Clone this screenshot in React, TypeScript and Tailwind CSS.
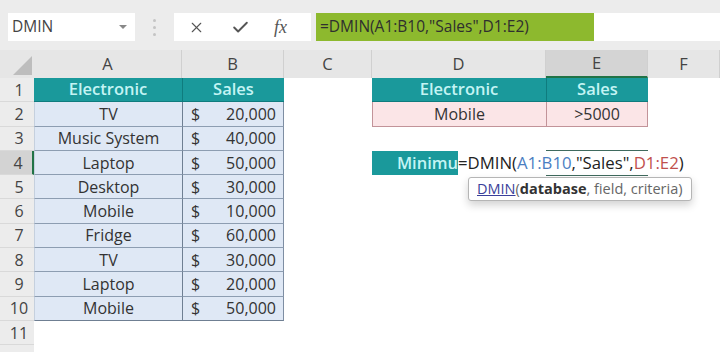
import { X, Check } from 'lucide-react';

const cols = 'grid grid-cols-[34px_148px_102px_88px_174px_102px_72px]';

const sales = [
  ['TV', '20,000'],
  ['Music System', '40,000'],
  ['Laptop', '50,000'],
  ['Desktop', '30,000'],
  ['Mobile', '10,000'],
  ['Fridge', '60,000'],
  ['TV', '30,000'],
  ['Laptop', '20,000'],
  ['Mobile', '50,000'],
];

const RowHead = ({ n, active }: { n?: number; active?: boolean }) => (
  <div
    className={`flex h-[24.3px] items-center justify-center border-b border-[#d9d9d9] pl-1 text-[16px] text-[#444] ${
      active ? 'bg-[#d3d3d3] border-r-2 border-r-[#217346]' : 'bg-[#ececec]'
    }`}>
    {n}
  </div>
);

const Toolbar = () => (
  <div className="flex h-[50px] items-start bg-[#ececec] pt-[13px]">
    <div className="ml-2 flex h-[28px] w-[127px] items-center justify-between bg-white pl-1 pr-2 text-[15.5px] text-[#444]">
      <span>DMIN</span>
      <span className="h-0 w-0 border-x-[4px] border-t-[4px] border-x-transparent border-t-[#888]" />
    </div>
    <div className="ml-[18px] mt-[6px] flex flex-col gap-[4px]">
      <span className="h-[3px] w-[3px] rounded-full bg-[#c4c4c4]" />
      <span className="h-[3px] w-[3px] rounded-full bg-[#c4c4c4]" />
      <span className="h-[3px] w-[3px] rounded-full bg-[#c4c4c4]" />
    </div>
    <div className="ml-[18px] flex h-[28px] w-[137px] items-center bg-white text-[#555]">
      <X size={17} strokeWidth={1.6} className="ml-[14px]" />
      <Check size={19} strokeWidth={2.4} className="ml-[26px]" />
      <span className="ml-[24px] font-['Liberation_Serif',serif] text-[18px] italic">fx</span>
    </div>
    <div className="ml-[5px] flex h-[28px] w-[278px] items-center bg-[#8db92e] pl-1 text-[15.5px] text-[#2f2f2f]">
      =DMIN(A1:B10,"Sales",D1:E2)
    </div>
    <div className="h-[28px] flex-1 bg-white" />
  </div>
);

const ColHeads = () => (
  <div className={`${cols} h-[28px] bg-[#e6e6e6] text-[16.5px] text-[#444]`}>
    <div className="relative">
      <div className="absolute bottom-[3px] right-[2px] h-0 w-0 border-b-[19px] border-l-[19px] border-b-[#bdbdbd] border-l-transparent" />
    </div>
    {['A', 'B', 'C', 'D', 'E', 'F'].map((c) => (
      <div
        key={c}
        className={`flex items-center justify-center border-r border-[#d0d0d0] ${
          c === 'E' ? 'bg-[#d4d4d4] border-b-2 border-b-[#217346]' : ''
        }`}>
        {c}
      </div>
    ))}
  </div>
);

const Head = ({ label, left }: { label: string; left?: boolean }) => (
  <div
    className={`flex h-[24.3px] items-center justify-center border-b border-[#0f7c7e] bg-[#1a999b] text-[16.5px] font-semibold text-[#c4f4f4] ${
      left ? 'border-l' : ''
    }`}>
    {label}
  </div>
);

export default function App() {
  return (
    <div className="relative h-[352px] w-[720px] overflow-hidden bg-white font-['Open_Sans',sans-serif] text-[#333]">
      <Toolbar />
      <ColHeads />

      {/* row 1 */}
      <div className={`${cols} text-[16px]`}>
        <RowHead n={1} />
        <Head label="Electronic" />
        <Head label="Sales" left />
        <div />
        <Head label="Electronic" />
        <Head label="Sales" left />
        <div />
      </div>

      {sales.map(([name, amount], i) => {
        const n = i + 2;
        const last = n === 10;
        return (
          <div key={n} className={`${cols} text-[16px]`}>
            <RowHead n={n} active={n === 4} />
            <div
              className={`flex h-[24.3px] items-center justify-center border-b border-l border-l-[#c5d0de] bg-[#dfe8f5] ${
                last ? 'border-b-[#6f7f92]' : 'border-b-[#8d9db1]'
              }`}>
              {name}
            </div>
            <div
              className={`flex h-[24.3px] items-center justify-between border-b border-l border-r border-l-[#6f7f92] border-r-[#7e8ea3] bg-[#dfe8f5] pl-[8px] pr-[7px] ${
                last ? 'border-b-[#6f7f92]' : 'border-b-[#8d9db1]'
              }`}>
              <span>$</span>
              <span>{amount}</span>
            </div>
            <div />
            {n === 2 ? (
              <>
                <div className="flex h-[24.3px] items-center justify-center border-b border-l border-[#c29399] bg-[#fbe5e7]">
                  Mobile
                </div>
                <div className="flex h-[24.3px] items-center justify-center border-b border-l border-r border-[#c29399] bg-[#fbe5e7]">
                  &gt;5000
                </div>
                <div />
              </>
            ) : n === 4 ? (
              <div className="relative col-span-3 flex h-[24.3px] items-center">
                <div className="absolute left-[174px] top-[-1px] h-[2px] w-[102px] bg-[#3f6a5e]" />
                <div className="absolute bottom-[-1px] left-[174px] h-[2px] w-[102px] bg-[#3f6a5e]" />
                <div className="flex h-full w-[86px] items-center justify-end bg-[#1a999b] text-[16.5px] font-semibold text-[#c4f4f4]">
                  Minimu
                </div>
                <div className="relative flex h-full items-center whitespace-pre bg-white pr-1 text-[16.75px] text-[#222]">
                  =DMIN(<span className="text-[#4a7ec2]">A1:B10</span>,"Sales",
                  <span className="text-[#c0504d]">D1:E2</span>)
                </div>
              </div>
            ) : (
              <>
                <div />
                <div />
                <div />
              </>
            )}
          </div>
        );
      })}

      <div className={cols}>
        <RowHead n={11} />
      </div>
      <div className={cols}>
        <RowHead />
      </div>

      {/* argument tooltip */}
      <div className="absolute left-[468px] top-[177px] flex h-[24px] w-[224px] items-center rounded-[3px] border border-[#b5b5b5] bg-white pl-[8px] text-[14.5px] text-[#666] shadow-[0_4px_8px_rgba(0,0,0,0.18)]">
        <span className="text-[#3a3f9a] underline">DMIN</span>(
        <span className="font-bold text-[#333]">database</span>, field, criteria)
      </div>
    </div>
  );
}
